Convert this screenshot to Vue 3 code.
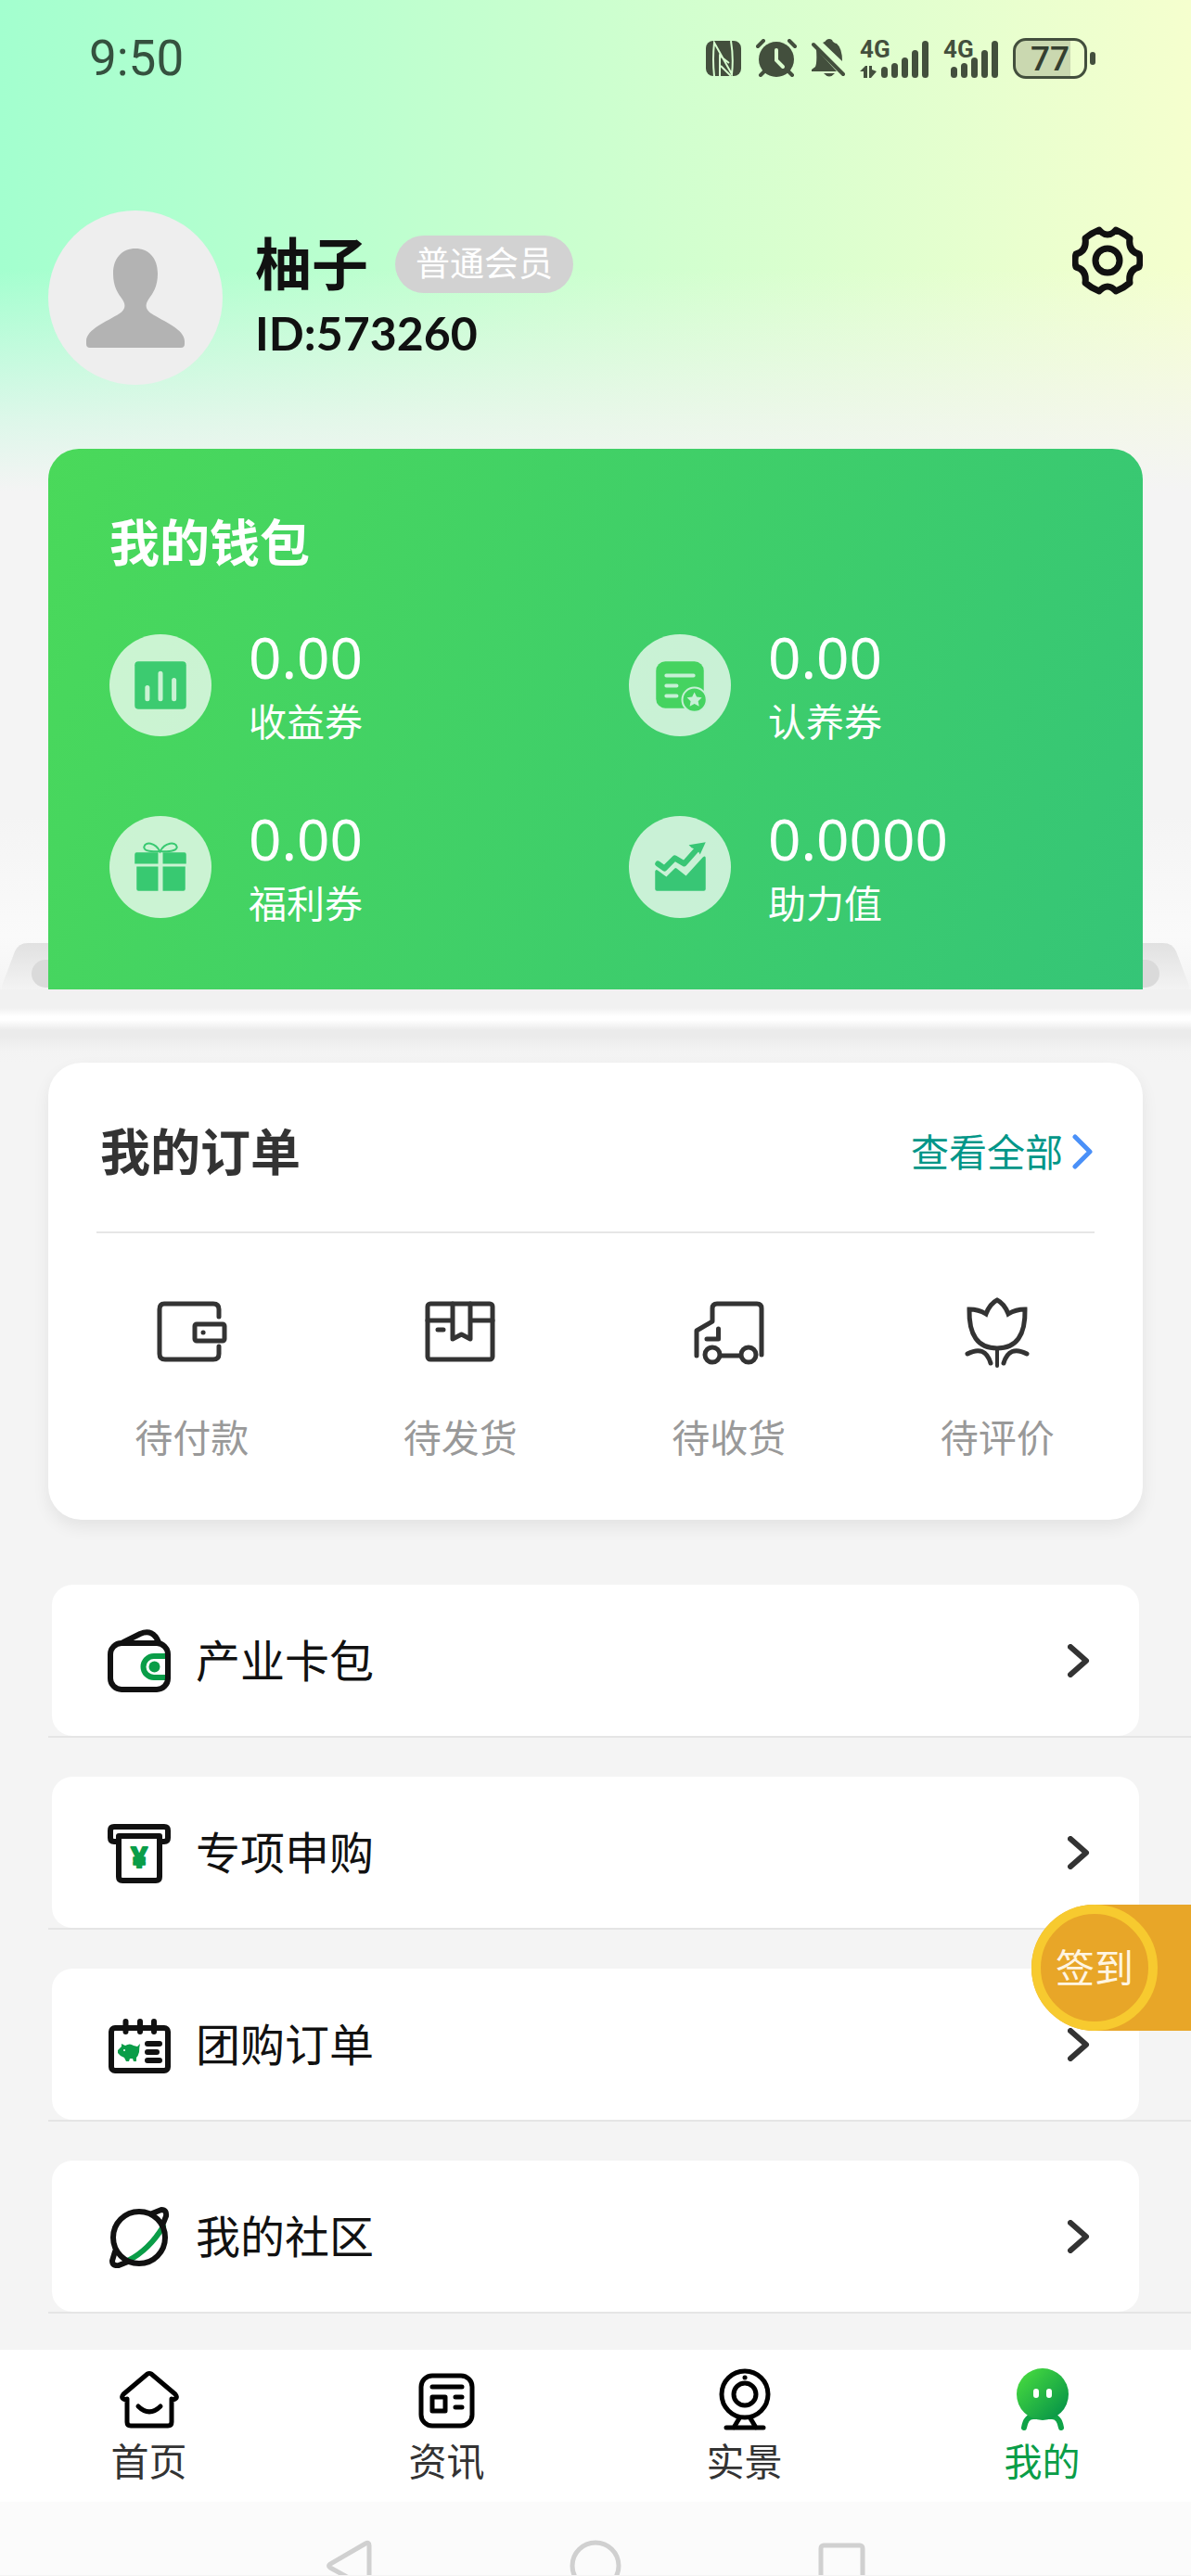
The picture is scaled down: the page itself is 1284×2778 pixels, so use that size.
<script setup>
const signalBars = [12, 16, 22, 30, 40]

const wallet = [
  {
    value: '0.00',
    label: '收益券',
    art: '<rect x="27" y="29" width="55" height="51" rx="4" fill="#3ccb70"/><path d="M40.5 57v12M54.5 42v27M69 49v20" stroke="#c9f2d3" stroke-width="5" stroke-linecap="round"/>'
  },
  {
    value: '0.00',
    label: '认养券',
    art: '<rect x="29" y="29" width="51" height="50" rx="10" fill="#45d360"/><path d="M40 44h29M40 55h11M40 66h11" stroke="#c6f0d5" stroke-width="4" stroke-linecap="round"/><circle cx="70" cy="70" r="13" fill="#45d360" stroke="#c6f0d5" stroke-width="2"/><path d="M70 62l2.4 5 5.6.7-4 3.9 1 5.4-5-2.6-5 2.6 1-5.4-4-3.9 5.6-.7z" fill="#c6f0d5"/>'
  },
  {
    value: '0.00',
    label: '福利券',
    art: '<path d="M29 39h23v12H27V41q0-2 2-2zM57 39h23q2 0 2 2v10H57zM29 54h23v26H31q-2 0-2-2zM57 54h24v24q0 2-2 2H57z" fill="#38c971"/><path d="M54 38C49 28 38 27 37 33c-1 5 10 5 17 5 7 0 19 0 18-5-1-6-13-5-18 5z" fill="none" stroke="#38c971" stroke-width="2"/>'
  },
  {
    value: '0.0000',
    label: '助力值',
    art: '<path d="M28 59q1-3 4 0l8 6 9-9q1-1 2 0l10 8 18-20q3-2 3 1v33q0 2-2 2H30q-2 0-2-2z" fill="#38c675"/><path d="M31 51l7 5 11-11 10 6 16-18" fill="none" stroke="#38c675" stroke-width="6" stroke-linecap="round" stroke-linejoin="round"/><path d="M82 28l-18 3 3 3q7 2 9 7z" fill="#38c675"/>'
  }
]

const orders = [
  {
    label: '待付款',
    art: '<path d="M67 21V13q0-6-6-6H8Q3 7 3 13v48q0 6 6 6h52q6 0 6-6v-8"/><rect x="41" y="29" width="32" height="18" rx="2"/><path d="M50 38h.1"/>'
  },
  {
    label: '待发货',
    art: '<rect x="3" y="7" width="70" height="60" rx="3"/><path d="M3 25h27M49 25h24M30 7v38l9.5-5 9.5 5V7M14 35h6"/>'
  },
  {
    label: '待收货',
    art: '<path d="M3 63V36l17-10V12q0-5 5-5h43q5 0 5 5v50M26.5 34v11H14M29 63h20"/><circle cx="20" cy="62" r="8"/><circle cx="59" cy="62" r="8"/>'
  },
  {
    label: '待评价',
    art: '<path stroke-linejoin="miter" d="M8 13q10 0 18 5Q30 7 38 3q8 4 12 15 8-5 18-5 1 42-30 42T8 13z"/><path stroke-width="4" d="M38 56v18"/><path d="M6 61q19-10 25 10M70 61q-19-10-25 10"/>'
  }
]

const menu = [
  {
    label: '产业卡包',
    art: '<path d="M64 29H50a11.500 11.500 0 0 0 0 23h14" stroke="#0a9d48"/><circle cx="50.500" cy="40.500" r="6" fill="#0a9d48" stroke="none"/><rect x="3" y="15" width="62" height="50" rx="12"/><path d="M17 14l18-9q14-6 20 9"/>'
  },
  {
    label: '专项申购',
    art: '<path d="M11 22H7q-4 0-4-4V10q0-4 4-4h54q4 0 4 4v8q0 4-4 4h-4"/><path d="M12 16h44v44q0 4-4 4H16q-4 0-4-4z"/><text x="34" y="50" text-anchor="middle" fill="#0a9d48" stroke="#0a9d48" stroke-width="2" font-size="31" font-weight="700" font-family="Noto Sans, sans-serif">¥</text>'
  },
  {
    label: '团购订单',
    art: '<rect x="4" y="16" width="61" height="46" rx="4"/><path d="M19.500 9v11M35 9v11M50 9v11M43 33h13M43 42h10M43 51h13"/><path d="M15 33l4 2q5-3 9 0l4 1 3-3q-1 4-1 9-1 4-3 6v4h-3l-1-3h-3l-1 3h-3l-2-4q-4-1-7-5v-3l4-4z" fill="#0a9d48" stroke="none"/><circle cx="18" cy="40" r="1" fill="#fff" stroke="none"/>'
  },
  {
    label: '我的社区',
    art: '<path d="M60 23Q45 48 22 60" stroke="#0a9d48"/><circle cx="34" cy="35" r="28"/><path d="M48 9l10-4q6 0 5 7l-4 10M8 50L5 60q0 6 7 5l10-4"/>'
  }
]

const tabs = [
  {
    label: '首页',
    active: false,
    art: '<path d="M10 34q-8-1-4-6L32 6q2-1 4 0l26 22q4 5-4 6M10 33v25q0 4 4 4h40q4 0 4-4V33"/><path d="M22 41q12 12 24 0"/>'
  },
  {
    label: '资讯',
    active: false,
    art: '<rect x="6" y="8" width="55" height="54" rx="12"/><path d="M18 20h32M43 31h7M43 42h7"/><rect x="18" y="31" width="14" height="15"/>'
  },
  {
    label: '实景',
    active: false,
    art: '<circle cx="34" cy="28" r="25"/><circle cx="34" cy="28" r="12"/><path d="M34 10h.1M28 54l-6 10M40 54l6 10M14 64h40"/>'
  },
  {
    label: '我的',
    active: true,
    art: '<defs><linearGradient id="mine" x1="0" y1="0" x2="1" y2="1"><stop offset="0.100" stop-color="#45d83f"/><stop offset="0.900" stop-color="#079448"/></linearGradient></defs><path d="M14 64q2-12 10-12h20q8 0 10 12" stroke="#0fa347" stroke-width="6"/><circle cx="34" cy="28" r="28" fill="url(#mine)" stroke="none"/><path d="M27 25v4M41 25v4" stroke="#fff" stroke-width="6"/>'
  }
]
</script>

<template>
  <div class="page">
    <header class="status">
      <time class="clock">9:50</time>
      <div class="status-icons">
        <svg class="nfc" viewBox="0 0 38 38">
          <rect width="38" height="38" rx="8" fill="#434f3d" />
          <path d="M9 38Q7 20 9 2L28 36Q30 18 27 0M15 38V16L25 24M16 27L27 38" fill="none" stroke="#d7ffcf" stroke-width="2" />
        </svg>
        <svg class="alarm" viewBox="0 0 44 41">
          <circle cx="22" cy="22" r="19" fill="#434f3d" />
          <path d="M2 8l6-6M42 8l-6-6M9 35l-4 4M35 35l4 4" stroke="#434f3d" stroke-width="4" stroke-linecap="round" />
          <path d="M22 12v11l7 7" fill="none" stroke="#dbffcf" stroke-width="4" stroke-linecap="round" />
        </svg>
        <svg class="bell" viewBox="0 0 36 41">
          <path d="M12 4q3-1 4-3 3-2 6 0 1 3 5 4 6 5 6 19zM5 11l22 24H0v-2l4-3q2-4 1-19zM13 37h12q-6 7-12 0z" fill="#434f3d" />
          <path d="M2 6l32 32" stroke="#434f3d" stroke-width="4" stroke-linecap="round" />
        </svg>
        <div class="signal wide">
          <span class="net">4G</span>
          <svg class="arrows" viewBox="0 0 18 13"><path d="M0 6l6-6h2v13H4V6zM10 0h3v4l5 2-6 7h-2z" fill="#434f3d" /></svg>
          <i v-for="(h, i) in signalBars" :key="i" class="bar" :style="{ height: h + 'px' }"></i>
        </div>
        <div class="signal">
          <span class="net">4G</span>
          <i v-for="(h, i) in signalBars" :key="i" class="bar" :style="{ height: h + 'px' }"></i>
        </div>
        <div class="battery"><span class="battery-body">77</span><i class="battery-tip"></i></div>
      </div>
    </header>

    <section class="profile">
      <svg class="avatar" viewBox="0 0 188 188">
        <circle cx="94" cy="94" r="94" fill="#eee" />
        <path d="M94 41c14 0 24 10 24 27 0 14-5 21-10 28-4 6-3 11 3 15 14 9 36 17 36 30v3q0 4-4 4H45q-4 0-4-4v-3c0-13 22-21 36-30 6-4 7-9 3-15-5-7-10-14-10-28 0-17 10-27 24-27z" fill="#b3b3b3" />
      </svg>
      <div class="who">
        <div class="name-row">
          <h1 class="name">柚子</h1>
          <span class="badge">普通会员</span>
        </div>
        <p class="uid">ID:573260</p>
      </div>
      <button class="settings" type="button" aria-label="设置">
        <svg viewBox="0 0 76 74" fill="none" stroke="#111" stroke-width="7" stroke-linejoin="round">
          <path d="M29 4Q38 14 47 4 55 7 62 13 60 27 72 30 74 37 72 44 60 47 62 61 55 67 47 70 38 60 29 70 21 67 14 61 16 47 4 44 2 37 4 30 16 27 14 13 21 7 29 4z" />
          <circle cx="38" cy="37" r="13" />
        </svg>
      </button>
    </section>

    <section class="stage">
      <svg class="bracket left" viewBox="0 0 52 50">
        <defs>
          <linearGradient id="slot" x1="0" y1="0" x2="0" y2="1"><stop offset="0" stop-color="#e1e1e1" /><stop offset="1" stop-color="#f3f3f3" /></linearGradient>
        </defs>
        <path d="M2 46L16 9Q20 0 30 0h22v50H2z" fill="url(#slot)" />
        <path d="M52 18h-3a15 15 0 0 0 0 30h3z" fill="#dadada" />
      </svg>
      <svg class="bracket right" viewBox="0 0 52 50">
        <path d="M2 46L16 9Q20 0 30 0h22v50H2z" fill="url(#slot)" />
        <path d="M52 18h-3a15 15 0 0 0 0 30h3z" fill="#dadada" />
      </svg>
      <div class="wallet">
        <h2 class="wallet-title">我的钱包</h2>
        <div class="wallet-grid">
          <div v-for="w in wallet" :key="w.label" class="asset">
            <svg class="asset-icon" viewBox="0 0 109 109">
              <circle cx="54.500" cy="54.500" r="54.500" fill="#fff" fill-opacity="0.720" />
              <g v-html="w.art"></g>
            </svg>
            <div class="asset-text">
              <strong class="amount">{{ w.value }}</strong>
              <span class="asset-label">{{ w.label }}</span>
            </div>
          </div>
        </div>
      </div>
    </section>
    <div class="ledge"></div>

    <section class="orders">
      <div class="orders-head">
        <h2 class="orders-title">我的订单</h2>
        <a class="all" href="#">
          查看全部
          <svg class="all-arrow" viewBox="0 0 24 40"><path d="M3 4l16 16L3 36" fill="none" stroke="#4a90f8" stroke-width="5" stroke-linecap="round" stroke-linejoin="round" /></svg>
        </a>
      </div>
      <div class="orders-row">
        <a v-for="o in orders" :key="o.label" class="order" href="#">
          <svg viewBox="0 0 76 76" fill="none" stroke="#333" stroke-width="5" stroke-linecap="round" stroke-linejoin="round" v-html="o.art"></svg>
          <span>{{ o.label }}</span>
        </a>
      </div>
    </section>

    <nav class="menu">
      <div v-for="m in menu" :key="m.label" class="menu-item">
        <a class="menu-link" href="#">
          <svg class="menu-icon" viewBox="0 0 68 68" fill="none" stroke="#111" stroke-width="6" stroke-linecap="round" stroke-linejoin="round" v-html="m.art"></svg>
          <span class="menu-label">{{ m.label }}</span>
          <svg class="menu-arrow" viewBox="0 0 24 36"><path d="M3 3l17 15L3 33" fill="none" stroke="#333" stroke-width="6" stroke-linecap="round" stroke-linejoin="round" /></svg>
        </a>
      </div>
      <button class="checkin" type="button"><span>签到</span></button>
    </nav>

    <nav class="tabs">
      <a v-for="t in tabs" :key="t.label" class="tab" :class="{ active: t.active }" href="#">
        <svg viewBox="0 0 68 68" fill="none" stroke="#000" stroke-width="5" stroke-linecap="round" stroke-linejoin="round" v-html="t.art"></svg>
        <span>{{ t.label }}</span>
      </a>
    </nav>

    <footer class="system">
      <svg viewBox="0 0 56 56"><path d="M50 6v44q0 4-4 1L8 30q-3-2 0-4L46 4q4-2 4 2z" /></svg>
      <svg viewBox="0 0 56 56"><circle cx="28" cy="28" r="25" /></svg>
      <svg viewBox="0 0 56 56"><rect x="5" y="6" width="45" height="45" rx="3" /></svg>
    </footer>
  </div>
</template>

<style>
body {
  margin: 0;
  background: #f4f4f4;
}
</style>

<style scoped>
* {
  box-sizing: border-box;
}
.page {
  min-height: 100vh;
  display: flex;
  flex-direction: column;
  overflow: hidden;
  font-family: 'Noto Sans', 'Noto Sans CJK SC', sans-serif;
  color: #111;
  background:
    linear-gradient(to bottom, rgba(244, 244, 244, 0) 290px, rgba(244, 244, 244, 0.7) 450px, #f4f4f4 530px, #f4f4f4 880px, #fafafa 1010px, #f4f4f4 1070px, #f4f4f4 100%),
    linear-gradient(to right, #a3ffcf, #ccffcf 50%, #f5ffce);
}
h1,
h2,
p {
  margin: 0;
}
a {
  color: inherit;
  text-decoration: none;
}
button {
  border: 0;
  padding: 0;
  background: none;
  font: inherit;
  cursor: pointer;
}
svg {
  display: block;
  flex: none;
}

.status {
  display: flex;
  align-items: center;
  justify-content: space-between;
  padding: 32px 103px 0 96px;
  height: 93px;
}
.clock {
  font-family: Roboto, sans-serif;
  font-size: 53px;
  line-height: 62px;
  color: #35513f;
}
.status-icons {
  display: flex;
  align-items: center;
  gap: 16px;
}
.nfc {
  width: 38px;
  height: 38px;
}
.alarm {
  width: 44px;
  height: 41px;
}
.bell {
  width: 36px;
  height: 41px;
}
.signal {
  position: relative;
  display: flex;
  align-items: flex-end;
  gap: 4px;
  height: 42px;
  padding-left: 8px;
}
.signal.wide {
  padding-left: 23px;
}
.net {
  position: absolute;
  left: 0;
  top: 0;
  font-family: Roboto, sans-serif;
  font-size: 26px;
  line-height: 22px;
  font-weight: 700;
  color: #434f3d;
}
.arrows {
  position: absolute;
  left: 0;
  bottom: 0;
  width: 18px;
  height: 13px;
}
.bar {
  width: 7px;
  border-radius: 4px;
  background: #434f3d;
}
.battery {
  display: flex;
  align-items: center;
  gap: 3px;
}
.battery-body {
  width: 80px;
  height: 44px;
  border: 3px solid #434f3d;
  border-radius: 14px;
  background: linear-gradient(to right, #cad8b0 80%, transparent 80%);
  font-family: Roboto, sans-serif;
  font-size: 37px;
  font-weight: 500;
  line-height: 39px;
  text-align: center;
  color: #353f30;
}
.battery-tip {
  width: 6px;
  height: 14px;
  border-radius: 3px;
  background: #434f3d;
}

.profile {
  display: flex;
  align-items: flex-start;
  padding: 134px 52px 0;
}
.avatar {
  width: 188px;
  height: 188px;
}
.who {
  flex: 1;
  padding: 24px 0 0 35px;
}
.name-row {
  display: flex;
  align-items: center;
  gap: 29px;
}
.name {
  font-size: 61px;
  line-height: 68px;
  font-weight: 700;
}
.badge {
  height: 62px;
  padding: 0 22px;
  border-radius: 31px;
  background: #d2d2d2;
  color: #fff;
  font-size: 37px;
  line-height: 60px;
}
.uid {
  margin-top: 10px;
  font-family: Lato, sans-serif;
  font-size: 50px;
  line-height: 60px;
  font-weight: 700;
}
.settings {
  margin-top: 17px;
}
.settings svg {
  width: 76px;
  height: 74px;
}

.stage {
  position: relative;
  padding: 69px 52px 0;
}
.bracket {
  position: absolute;
  bottom: 0;
  width: 52px;
  height: 50px;
}
.left {
  left: 0;
}
.right {
  right: 0;
  transform: scaleX(-1);
}
.wallet {
  padding: 69px 0 69px 66px;
  border-radius: 33px 33px 0 0;
  background: linear-gradient(115deg, #4ad95a, #35c577);
  color: #fff;
}
.wallet-title {
  font-size: 54px;
  line-height: 64px;
  font-weight: 700;
}
.wallet-grid {
  display: grid;
  grid-template-columns: 560px 1fr;
  row-gap: 70px;
  margin-top: 59px;
}
.asset {
  display: flex;
  align-items: center;
  gap: 40px;
}
.asset-icon {
  width: 110px;
  height: 110px;
}
.asset-text {
  display: flex;
  flex-direction: column;
  gap: 14px;
}
.amount {
  font-size: 62px;
  line-height: 64px;
  font-weight: 400;
}
.asset-label {
  font-size: 41px;
  line-height: 48px;
}
.ledge {
  height: 79px;
  background: linear-gradient(to bottom, #f1f1f1, #f1f1f1 20px, #fff 29px, #fff 33px, #ebebeb 44px, #ebebeb 50px, #f3f3f3 66px, #f4f4f4);
}

.orders {
  margin: 0 52px;
  padding: 0 0 65px;
  border-radius: 36px;
  background: #fff;
  box-shadow: 0 8px 18px rgba(0, 0, 0, 0.07);
}
.orders-head {
  display: flex;
  align-items: center;
  justify-content: space-between;
  height: 184px;
  margin: 0 52px;
  padding: 9px 0 0 4px;
  border-bottom: 2px solid #e6e6e6;
}
.orders-title {
  font-size: 54px;
  line-height: 64px;
  font-weight: 700;
  color: #333;
}
.all {
  display: flex;
  align-items: center;
  gap: 10px;
  font-size: 41px;
  line-height: 48px;
  color: #009688;
}
.all-arrow {
  width: 24px;
  height: 40px;
}
.orders-row {
  display: grid;
  grid-template-columns: repeat(4, 1fr);
  padding: 69px 12px 0 10px;
}
.order {
  display: flex;
  flex-direction: column;
  align-items: center;
  gap: 51px;
  font-size: 41px;
  line-height: 48px;
  color: #999;
}
.order svg {
  width: 76px;
  height: 76px;
}

.menu {
  position: relative;
  display: flex;
  flex-direction: column;
  gap: 42px;
  padding: 70px 0 39px 52px;
}
.menu-item {
  padding: 0 56px 0 4px;
  border-bottom: 2px solid #e5e5e5;
}
.menu-link {
  display: flex;
  align-items: center;
  height: 163px;
  padding: 0 53px 0 60px;
  border-radius: 22px;
  background: #fff;
}
.menu-icon {
  width: 68px;
  height: 68px;
}
.menu-label {
  flex: 1;
  padding-left: 27px;
  font-size: 48px;
  line-height: 56px;
}
.menu-arrow {
  width: 24px;
  height: 36px;
}
.checkin {
  position: absolute;
  right: 0;
  top: 415px;
  width: 172px;
  height: 136px;
  border-radius: 68px 0 0 68px;
  background: #e8a628;
}
.checkin span {
  display: block;
  width: 136px;
  height: 136px;
  border: 10px solid #f7ca2f;
  border-radius: 50%;
  font-size: 42px;
  line-height: 116px;
  text-align: center;
  color: #fff5e2;
}

.tabs {
  display: grid;
  grid-template-columns: repeat(4, 1fr);
  padding: 20px 0;
  background: #fff;
}
.tab {
  display: flex;
  flex-direction: column;
  align-items: center;
  gap: 8px;
  font-size: 41px;
  line-height: 48px;
  color: #333;
}
.tab svg {
  width: 68px;
  height: 68px;
}
.tab.active {
  color: #0a9d48;
}
.system {
  display: flex;
  flex: 1;
  justify-content: center;
  gap: 210px;
  max-height: 79px;
  padding-top: 41px;
  overflow: hidden;
  background: #fbfbfb;
}
.system svg {
  width: 56px;
  height: 56px;
  margin-bottom: -18px;
  fill: none;
  stroke: #d0d0d0;
  stroke-width: 5;
}
</style>
